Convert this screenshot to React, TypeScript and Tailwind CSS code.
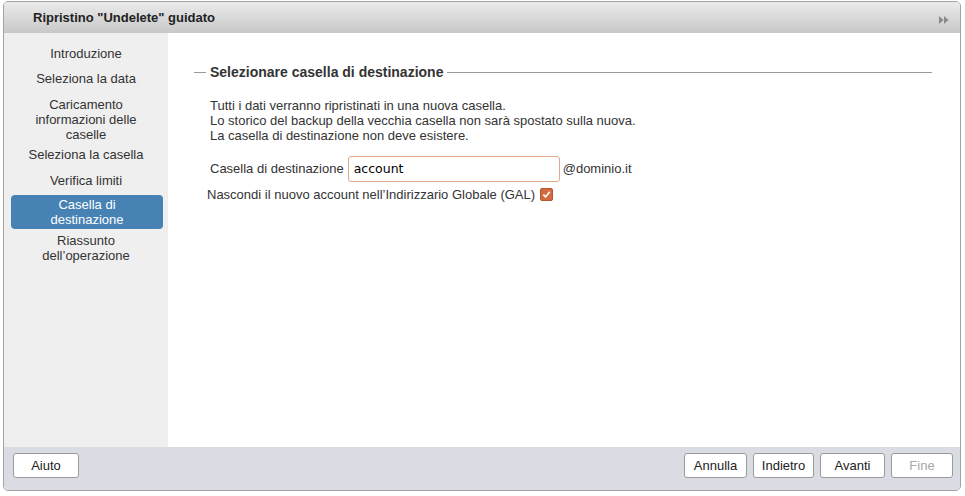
import React from 'react';

const steps = [
  { label: ['Introduzione'], cls: 'mt-0' },
  { label: ['Seleziona la data'], cls: 'mt-[10px]' },
  { label: ['Caricamento', 'informazioni delle', 'caselle'], cls: 'mt-[11px]' },
  { label: ['Seleziona la casella'], cls: 'mt-[5px]' },
  { label: ['Verifica limiti'], cls: 'mt-[11px]' },
  { label: ['Casella di', 'destinazione'], cls: 'mt-[7px]', active: true },
  { label: ['Riassunto', 'dell\u2019operazione'], cls: 'mt-[4px]' },
];

const Btn = ({ children, w, disabled }: { children: React.ReactNode; w: string; disabled?: boolean }) => (
  <button
    className={`${w} h-[25px] rounded-[3px] border border-[#9a9a9a] bg-white text-[13px] ${disabled ? 'text-[#a8a8a8]' : 'text-[#222]'}`}
  >
    {children}
  </button>
);

export default function App() {
  return (
    <div className="w-[965px] h-[496px] bg-white overflow-hidden" style={{ fontFamily: '"Liberation Sans", Arial, sans-serif' }}>
      <div className="ml-[3px] mt-[1px] w-[958px] h-[490px] border border-[#a3a3a3] rounded-[5px] overflow-hidden flex flex-col">
        {/* header */}
        <div className="h-[31px] shrink-0 bg-gradient-to-b from-[#ebebeb] to-[#c8c8c8] flex items-center justify-between pl-[29px] pr-[11px]">
          <span className="text-[13px] font-bold text-[#222]">Ripristino "Undelete" guidato</span>
          <svg width="10" height="8" viewBox="0 0 10 8" className="mt-[4px]">
            <path d="M0 0 L4.5 4 L0 8 Z" fill="#8a8a8a" />
            <path d="M5 0 L9.5 4 L5 8 Z" fill="#8a8a8a" />
          </svg>
        </div>

        <div className="flex flex-1 min-h-0">
          {/* sidebar */}
          <div className="w-[164px] shrink-0 bg-[#efefef] pt-[13px] text-[13px] leading-[15px] text-[#333]">
            {steps.map((s, i) =>
              s.active ? (
                <div
                  key={i}
                  className={`${s.cls} ml-[7px] mr-[5px] h-[34px] rounded-[4px] bg-[#4682b4] text-white flex flex-col items-center justify-center text-center`}
                >
                  {s.label.map((l) => (
                    <span key={l}>{l}</span>
                  ))}
                </div>
              ) : (
                <div key={i} className={`${s.cls} flex flex-col items-center text-center`}>
                  {s.label.map((l) => (
                    <span key={l}>{l}</span>
                  ))}
                </div>
              )
            )}
          </div>

          {/* content */}
          <div className="flex-1 bg-white pl-[26px] pr-[28px] pt-[30px] text-[13px] text-[#333]">
            <div className="flex items-center">
              <div className="w-[12px] h-px bg-[#9a9a9a]" />
              <span className="px-[4px] text-[14px] font-bold text-[#333] leading-[19px]">Selezionare casella di destinazione</span>
              <div className="flex-1 h-px bg-[#9a9a9a]" />
            </div>

            <div className="pl-[16px] mt-[16px] leading-[15px]">
              <div>Tutti i dati verranno ripristinati in una nuova casella.</div>
              <div>Lo storico del backup della vecchia casella non sarà spostato sulla nuova.</div>
              <div>La casella di destinazione non deve esistere.</div>
            </div>

            <div className="pl-[16px] mt-[13px] flex items-center">
              <span>Casella di destinazione</span>
              <div className="ml-[4px] w-[212px] h-[26px] rounded-[3px] border border-[#e2a88a] bg-white flex items-center pl-[5px] text-[12.5px] text-black" style={{ fontFamily: '"DejaVu Sans", sans-serif' }}>
                account
              </div>
              <span className="ml-[3px]">@dominio.it</span>
            </div>

            <div className="pl-[13px] mt-[3px] flex items-center">
              <span>Nascondi il nuovo account nell’Indirizzario Globale (GAL)</span>
              <span className="ml-[5px] w-[13px] h-[13px] rounded-[2px] bg-[#d2693f] border border-[#b8552e] flex items-center justify-center">
                <svg width="9" height="9" viewBox="0 0 9 9">
                  <path d="M1.3 4.6 L3.6 6.8 L7.8 1.8" stroke="white" strokeWidth="1.6" fill="none" />
                </svg>
              </span>
            </div>
          </div>
        </div>

        {/* footer */}
        <div className="h-[43px] shrink-0 bg-[#d9dde3] flex items-start justify-between pt-[6px] pl-[9px] pr-[7px]">
          <Btn w="w-[66px]">Aiuto</Btn>
          <div className="flex gap-[6px]">
            <Btn w="w-[63px]">Annulla</Btn>
            <Btn w="w-[61px]">Indietro</Btn>
            <Btn w="w-[65px]">Avanti</Btn>
            <Btn w="w-[62px]" disabled>Fine</Btn>
          </div>
        </div>
      </div>
    </div>
  );
}
